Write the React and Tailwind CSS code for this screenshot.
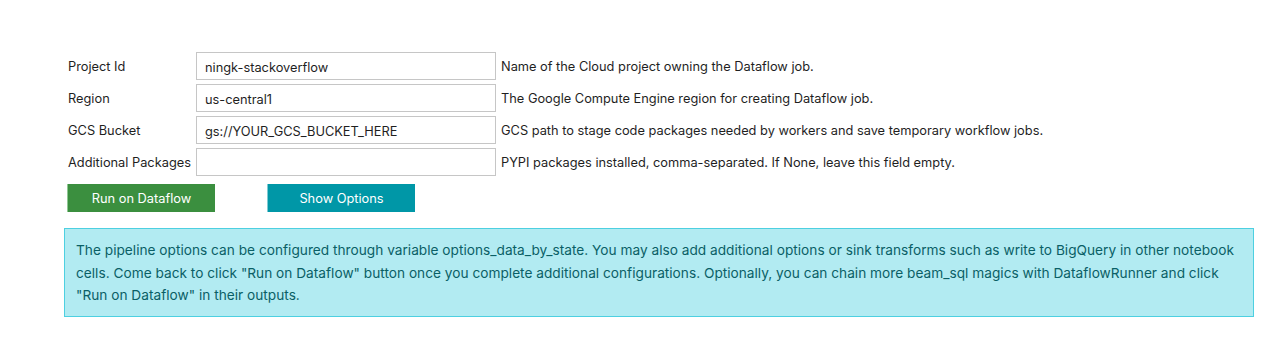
const fields = [
  { label: 'Project Id', value: 'ningk-stackoverflow', help: 'Name of the Cloud project owning the Dataflow job.' },
  { label: 'Region', value: 'us-central1', help: 'The Google Compute Engine region for creating Dataflow job.' },
  { label: 'GCS Bucket', value: 'gs://YOUR_GCS_BUCKET_HERE', help: 'GCS path to stage code packages needed by workers and save temporary workflow jobs.' },
  { label: 'Additional Packages', value: '', help: 'PYPI packages installed, comma-separated. If None, leave this field empty.' },
];

export default function App() {
  return (
    <div className="w-[1275px] h-[348px] bg-white text-[12.8px] text-[#1f1f1f] font-['Inter','Liberation_Sans',sans-serif]">
      <div className="pl-[64px] pt-[52px] w-[1254px]">
        <div className="flex flex-col gap-[4px]">
          {fields.map((f) => (
            <div key={f.label} className="flex items-center h-[28px] pt-[2px]">
              <label className="w-[132px] pl-[4px] shrink-0">{f.label}</label>
              <input
                readOnly
                value={f.value}
                className="w-[300px] h-[28px] -mt-[2px] border border-[#c6c6c6] px-[8px] pt-[2px] text-[12.8px] outline-none"
              />
              <span className="pl-[5px]">{f.help}</span>
            </div>
          ))}
        </div>
        <div className="flex gap-[52px] pl-[3px] mt-[8px]">
          <button className="w-[148px] h-[28px] pt-[2px] bg-[#3b8f3f] border-l border-[#8fc893] text-white">Run on Dataflow</button>
          <button className="w-[148px] h-[28px] pt-[2px] bg-[#0097a7] border-l border-[#7fcbd3] text-white">Show Options</button>
        </div>
        <div className="mt-[16px] h-[89px] bg-[#b2ebf2] border border-[#4dd0e1] text-[#0a5f66] text-[13.7px] px-[11px] pt-[10px] leading-[22.5px]">
          The pipeline options can be configured through variable options_data_by_state. You may also add additional options or sink transforms such as write to BigQuery in other notebook cells. Come back to click "Run on Dataflow" button once you complete additional configurations. Optionally, you can chain more beam_sql magics with DataflowRunner and click "Run on Dataflow" in their outputs.
        </div>
      </div>
    </div>
  );
}
